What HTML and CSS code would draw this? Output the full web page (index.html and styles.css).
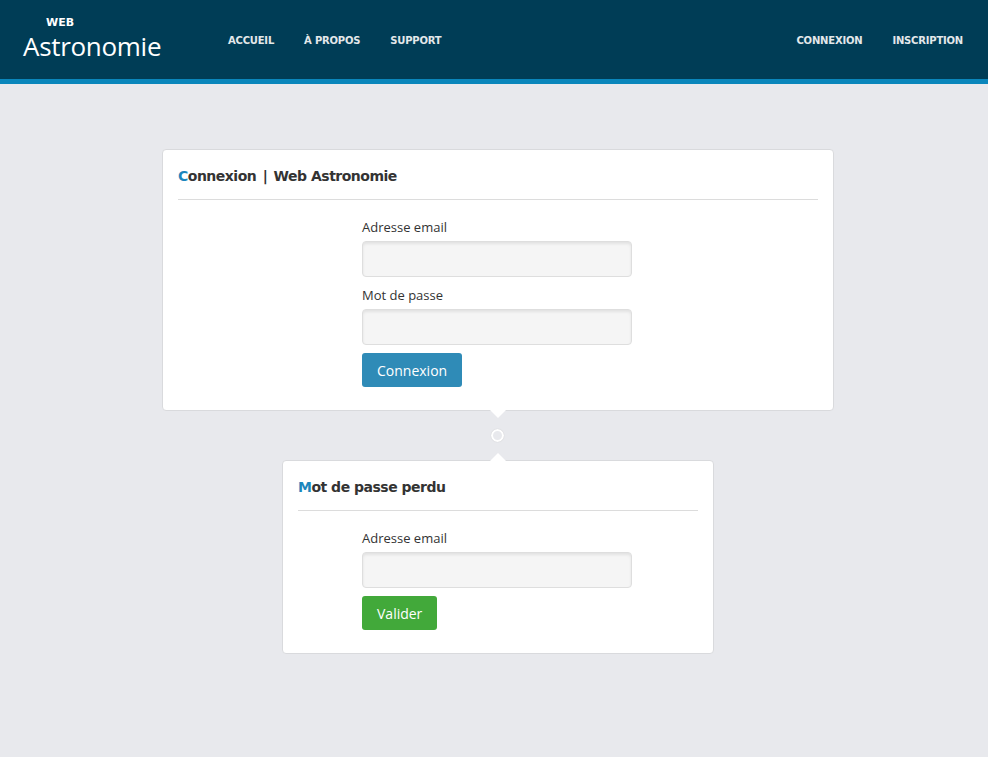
FILE: index.html
```html
<!DOCTYPE html>
<html lang="fr">

<head>
    <meta charset="UTF-8">
    <meta name="viewport" content="width=device-width, initial-scale=1.0">
    <title>Connexion | Web Astronomie</title>
    <link rel="stylesheet" href="styles.css">
</head>

<body>
    <header class="header">
        <a class="logo" href="#">
            <span class="logo-small">WEB</span>
            <span class="logo-big">Astronomie</span>
        </a>
        <nav class="nav">
            <a href="#">ACCUEIL</a>
            <a href="#">À PROPOS</a>
            <a href="#">SUPPORT</a>
        </nav>
        <nav class="nav nav-right">
            <a href="#">CONNEXION</a>
            <a href="#">INSCRIPTION</a>
        </nav>
    </header>

    <main class="main">
        <section class="card card-login">
            <h2 class="card-title"><span class="first">C</span>onnexion <span class="sep">|</span> Web Astronomie</h2>
            <form class="form">
                <label for="email">Adresse email</label>
                <input id="email" type="text">
                <label for="pass">Mot de passe</label>
                <input id="pass" type="password">
                <div><button type="button" class="btn btn-blue">Connexion</button></div>
            </form>
        </section>

        <div class="link">
            <span class="dot"></span>
        </div>

        <section class="card card-lost">
            <h2 class="card-title"><span class="first">M</span>ot de passe perdu</h2>
            <form class="form">
                <label for="email2">Adresse email</label>
                <input id="email2" type="text">
                <div><button type="button" class="btn btn-green">Valider</button></div>
            </form>
        </section>
    </main>
</body>

</html>
```
FILE: styles.css
```css
* {
    margin: 0;
    padding: 0;
    box-sizing: border-box;
}

body {
    background: #e8e9ed;
    font-family: "Open Sans", "Liberation Sans", sans-serif;
    color: #333;
}

a {
    text-decoration: none;
}

.header {
    height: 84px;
    background: #003d56;
    border-bottom: 5px solid #0a86bb;
    display: flex;
    align-items: center;
    padding: 0 25px 0 23px;
}

.logo {
    display: flex;
    flex-direction: column;
    color: #fff;
    width: 205px;
    margin-top: 1px;
}

.logo-small {
    font-family: "DejaVu Sans", sans-serif;
    font-weight: bold;
    font-size: 11px;
    padding-left: 23px;
    line-height: 12px;
}

.logo-big {
    font-size: 26px;
    line-height: 34px;
    letter-spacing: -0.3px;
}

.nav {
    display: flex;
    gap: 30px;
    margin-top: 2px;
}

.nav a {
    font-family: "DejaVu Sans", sans-serif;
    font-weight: bold;
    font-size: 10px;
    color: #e3e8ea;
    letter-spacing: -0.2px;
}

.nav-right {
    margin-left: auto;
}

.main {
    display: flex;
    flex-direction: column;
    align-items: center;
    padding: 65px 0 0 8px;
}

.card {
    background: #fff;
    border: 1px solid #d9dadd;
    border-radius: 4px;
    padding: 0 15px 23px;
    position: relative;
}

.card-login {
    width: 672px;
}

.card-login::after {
    content: "";
    position: absolute;
    left: 327px;
    bottom: -8px;
    border: 8px solid transparent;
    border-bottom: 0;
    border-top-color: #fff;
}

.card-lost {
    width: 432px;
}

.card-lost::before {
    content: "";
    position: absolute;
    left: 207px;
    top: -8px;
    border: 8px solid transparent;
    border-top: 0;
    border-bottom-color: #fff;
}

.card-title {
    font-family: "DejaVu Sans", sans-serif;
    font-size: 14px;
    font-weight: bold;
    line-height: 17px;
    color: #333;
    padding: 18px 0 14px;
    border-bottom: 1px solid #dcdcdc;
    letter-spacing: -0.5px;
}

.card-title .first {
    color: #1c86bd;
}

.card-title .sep {
    margin: 0 2px;
}

.form {
    width: 272px;
    padding-right: 2px;
    margin: 18px auto 0;
    display: flex;
    flex-direction: column;
}

.form label {
    font-size: 13px;
    color: #333;
    line-height: 18px;
    margin-bottom: 5px;
}

.form input {
    height: 36px;
    background: #f5f5f5;
    border: 1px solid #dedede;
    border-radius: 4px;
    box-shadow: inset 0 2px 3px rgba(0, 0, 0, 0.08);
    margin-bottom: 9px;
    outline: none;
}

.btn {
    border: 0;
    border-radius: 3px;
    color: #fff;
    font-family: "Open Sans", "Liberation Sans", sans-serif;
    font-size: 14px;
    height: 34px;
    padding: 0 15px;
    margin-top: -1px;
}

.btn-blue {
    background: #2f8bb7;
}

.btn-green {
    background: #42a93a;
}

.link {
    height: 49px;
    display: flex;
    align-items: center;
    justify-content: center;
    margin-right: 1px;
}

.dot {
    width: 13px;
    height: 13px;
    border-radius: 50%;
    border: 2px solid #fff;
    background: #e8e9ed;
    box-shadow: 0 0 1px rgba(0, 0, 0, 0.2);
}
```
